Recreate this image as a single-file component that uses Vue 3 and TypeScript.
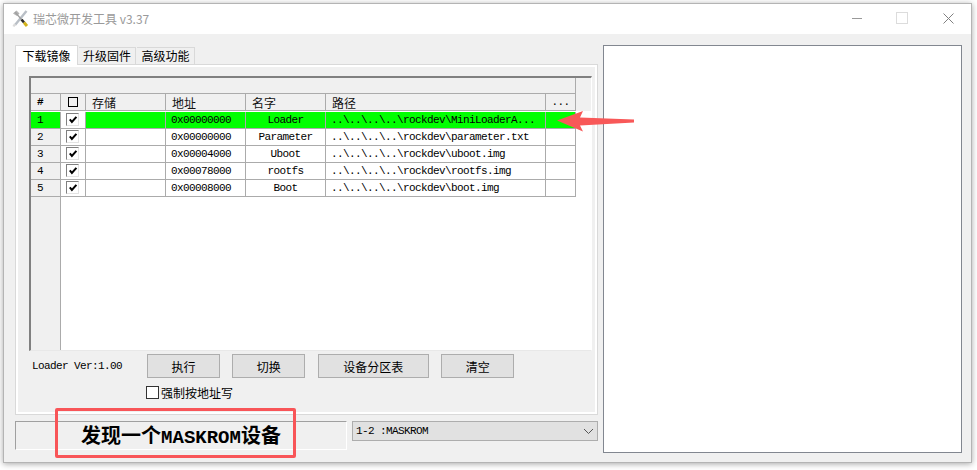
<script setup lang="ts">
interface Row { id: number; addr: string; name: string; path: string }
const rows: Row[] = [
  { id: 1, addr: '0x00000000', name: 'Loader', path: '..\\..\\..\\..\\rockdev\\MiniLoaderA...' },
  { id: 2, addr: '0x00000000', name: 'Parameter', path: '..\\..\\..\\..\\rockdev\\parameter.txt' },
  { id: 3, addr: '0x00004000', name: 'Uboot', path: '..\\..\\..\\..\\rockdev\\uboot.img' },
  { id: 4, addr: '0x00078000', name: 'rootfs', path: '..\\..\\..\\..\\rockdev\\rootfs.img' },
  { id: 5, addr: '0x00008000', name: 'Boot', path: '..\\..\\..\\..\\rockdev\\boot.img' },
]
const buttons = [
  { label: '执行', width: 73 },
  { label: '切换', width: 73 },
  { label: '设备分区表', width: 111 },
  { label: '清空', width: 73 },
]
</script>

<template>
  <div class="page">
    <div class="window">
      <header class="titlebar">
        <svg class="app-icon" width="17" height="18" viewBox="0 0 17 18">
          <path d="M14.5 1 L3 15" stroke="#b9bfc6" stroke-width="2.4" />
          <path d="M3 14 L1.5 16.5" stroke="#dadada" stroke-width="2.4" />
          <path d="M1 3.5 L4.5 0.5 L7.5 3.5 L5 6 Z" fill="#b4b4b4" />
          <path d="M3 2 L9.5 9.5" stroke="#a0a0a0" stroke-width="1.3" />
          <path d="M9.5 9.5 L12 12.5" stroke="#2a2a2a" stroke-width="2.6" />
          <path d="M12 12.5 L15 16" stroke="#d2b21c" stroke-width="3" />
        </svg>
        <span class="title">瑞芯微开发工具 v3.37</span>
        <div class="controls">
          <span class="ctl-min"></span>
          <span class="ctl-max"></span>
          <svg class="ctl-close" width="11" height="11" viewBox="0 0 11 11">
            <path d="M0.5 0.5 L10.5 10.5 M10.5 0.5 L0.5 10.5" stroke="#808080" stroke-width="1" fill="none" />
          </svg>
        </div>
      </header>

      <div class="content">
        <div class="left">
          <nav class="tabs">
            <span class="tab active">下载镜像</span>
            <span class="tab">升级固件</span>
            <span class="tab">高级功能</span>
          </nav>

          <section class="panel">
            <div class="grid-frame">
              <div class="grid-top"></div>
              <div class="grid-row head">
                <span class="cell hash mono">#</span>
                <span class="cell center"><i class="head-box"></i></span>
                <span class="cell cjk">存储</span>
                <span class="cell cjk">地址</span>
                <span class="cell cjk">名字</span>
                <span class="cell cjk">路径</span>
                <span class="cell center mono">...</span>
              </div>
              <div v-for="row in rows" :key="row.id" class="grid-row" :class="{ selected: row.id === 1 }">
                <span class="cell hash index mono">{{ row.id }}</span>
                <span class="cell center check-cell">
                  <i class="check">
                    <svg width="11" height="11" viewBox="0 0 11 11">
                      <path d="M2.8 5.4 L4.9 8 L9.4 2.8" stroke="#000" stroke-width="2" fill="none" />
                    </svg>
                  </i>
                </span>
                <span class="cell"></span>
                <span class="cell mono">{{ row.addr }}</span>
                <span class="cell center mono">{{ row.name }}</span>
                <span class="cell mono">{{ row.path }}</span>
                <span class="cell"></span>
              </div>
              <div class="grid-fill"><span class="fill-index"></span></div>
            </div>

            <div class="actions">
              <span class="loader-ver mono">Loader Ver:1.00</span>
              <button v-for="b in buttons" :key="b.label" class="btn" :style="{ width: b.width + 'px' }">{{ b.label }}</button>
            </div>
            <label class="force">
              <i class="force-box"></i>
              <span>强制按地址写</span>
            </label>
          </section>

          <div class="bottom">
            <div class="status">
              <span class="status-text">发现一个<b>MASKROM</b>设备</span>
              <div class="red-box"></div>
            </div>
            <div class="combo">
              <span class="mono">1-2 :MASKROM</span>
              <svg width="11" height="7" viewBox="0 0 11 7">
                <path d="M1 1 L5.5 5.5 L10 1" stroke="#555" stroke-width="1" fill="none" />
              </svg>
            </div>
          </div>
        </div>
        <aside class="log"></aside>
      </div>

      <svg class="arrow" width="80" height="22" viewBox="0 0 80 22">
        <path d="M0 9.5 L26 0 L23 6.5 L77 8.5 L77 11.5 L23 14.5 L26 20.5 Z" fill="#f85858" />
      </svg>
    </div>
  </div>
</template>

<style>
html, body { margin: 0; background: #fff; }
</style>

<style scoped>
.page {
  width: 977px;
  height: 470px;
  padding: 3px 5px 7px 3px;
  box-sizing: border-box;
  overflow: hidden;
  font-family: "Noto Sans CJK SC", sans-serif;
  font-size: 12px;
  color: #000;
}
.window {
  position: relative;
  height: 100%;
  border: 1px solid #b4b4b4;
  box-sizing: border-box;
  background: #f0f0f0;
  box-shadow: 0 1px 6px rgba(0, 0, 0, 0.35);
}
.titlebar {
  display: flex;
  align-items: center;
  height: 30px;
  box-sizing: border-box;
  padding: 0 0 2px 8px;
  background: #fff;
}
.app-icon { margin-top: 2px; flex: none; }
.title {
  margin-left: 4px;
  color: #9a9a9a;
  font-size: 12px;
  font-family: "Noto Sans CJK SC", "Liberation Sans", sans-serif;
}
.controls {
  margin-left: auto;
  display: flex;
  align-items: center;
  padding-right: 17px;
}
.ctl-min { width: 10px; height: 1px; background: #999; }
.ctl-max {
  width: 10px;
  height: 10px;
  border: 1px solid #dcdcdc;
  box-sizing: content-box;
  margin-left: 34px;
}
.ctl-close { margin-left: 35px; }
.content {
  display: flex;
  gap: 5px;
  padding: 11px 9px 0 11px;
}
.left { width: 583px; flex: none; }
.tabs {
  display: flex;
  height: 19px;
  align-items: flex-end;
}
.tab {
  height: 17px;
  line-height: 16px;
  width: 57px;
  text-align: center;
  box-sizing: border-box;
  background: #f0f0f0;
  border: 1px solid #d9d9d9;
  border-bottom: none;
  border-left: none;
  margin-left: 1px;
}
.tab:last-child { width: 58px; }
.tab.active {
  height: 20px;
  line-height: 19px;
  width: 63px;
  margin-left: 0;
  margin-bottom: -1px;
  background: #fff;
  border-left: 1px solid #d9d9d9;
  position: relative;
  z-index: 1;
}
.panel {
  height: 351px;
  box-sizing: border-box;
  border: 1px solid #d9d9d9;
  box-shadow: inset 0 0 0 2px #fff;
  padding: 11px 5px 0 13px;
}
.grid-frame {
  display: flex;
  flex-direction: column;
  height: 275px;
  box-sizing: border-box;
  border-top: 2px solid #808080;
  border-left: 2px solid #808080;
  border-right: 1px solid #fff;
  border-bottom: 1px solid #e8e8e8;
  background: #fff;
}
.grid-top {
  height: 16px;
  flex: none;
  box-sizing: border-box;
  width: 545px;
  border-bottom: 1px solid #ababab;
  border-right: 1px solid #ababab;
  background: #f0f0f0;
  box-shadow: 15px 0 0 #f0f0f0;
}
.grid-row {
  display: grid;
  grid-template-columns: 30px 25px 80px 80px 80px 220px 30px;
  height: 17px;
  flex: none;
  width: 545px;
}
.grid-row.head {
  background: #f0f0f0;
  box-shadow: 15px 0 0 #f0f0f0;
  margin-bottom: 1px;
}
.cell {
  box-sizing: border-box;
  border-right: 1px solid #ababab;
  border-bottom: 1px solid #ababab;
  padding-left: 5px;
  line-height: 16px;
  white-space: nowrap;
  overflow: hidden;
}
.cjk { font-size: 12px; padding-left: 6px; line-height: 17px; color: #111; }
.center { padding-left: 0; text-align: center; display: flex; align-items: center; justify-content: center; }
.mono {
  font-family: "Liberation Mono", "DejaVu Sans Mono", monospace;
  font-size: 11px;
  letter-spacing: -0.6px;
}
.hash { background: #f0f0f0; }
.selected .cell { background: #00ff00; }
.head .hash { font-weight: 700; padding-left: 6px; }
.index { padding-left: 6px; }
.head-box {
  width: 10px;
  height: 10px;
  border: 1px solid #000;
  box-sizing: border-box;
  display: block;
}
.check-cell,
.selected .check-cell { background: #fff; padding: 0 1px 1px 0; }
.check {
  display: block;
  width: 13px;
  height: 13px;
  box-sizing: border-box;
  border: 1px solid;
  border-color: #808080 #e3e3e3 #e3e3e3 #808080;
  background: #fff;
}
.check svg { display: block; }
.grid-fill { flex: 1; display: flex; }
.fill-index { width: 30px; box-sizing: border-box; background: #f0f0f0; border-right: 1px solid #ababab; }
.actions {
  display: flex;
  align-items: center;
  gap: 12.4px;
  margin-top: 3px;
  height: 24px;
}
.loader-ver { width: 105.6px; padding-left: 3px; box-sizing: border-box; flex: none; }
.btn {
  height: 24px;
  padding: 0;
  box-sizing: border-box;
  background: #e1e1e1;
  border: 1px solid #adadad;
  font: inherit;
  color: #000;
  flex: none;
}
.force {
  display: flex;
  align-items: center;
  gap: 2px;
  margin: 7px 0 0 117px;
  height: 15px;
}
.force-box {
  width: 13px;
  height: 13px;
  border: 1px solid #333;
  background: #fff;
  box-sizing: border-box;
  display: block;
}
.bottom {
  display: flex;
  gap: 5px;
  margin-top: 6px;
  align-items: flex-start;
}
.status {
  position: relative;
  width: 332px;
  height: 29px;
  box-sizing: border-box;
  border: 1px solid;
  border-color: #a0a0a0 #fff #fff #a0a0a0;
  display: flex;
  align-items: center;
  justify-content: center;
}
.status-text {
  font-size: 20px;
  font-weight: 700;
  font-family: "Noto Sans CJK SC", sans-serif;
  line-height: 27px;
  padding-top: 2px;
}
.status-text b {
  font-family: "Liberation Mono", monospace;
  font-size: 19px;
}
.red-box {
  position: absolute;
  left: 39px;
  top: -14px;
  width: 241px;
  height: 50px;
  box-sizing: border-box;
  border: 3px solid #f85558;
  border-radius: 2px;
}
.combo {
  width: 246px;
  height: 20px;
  box-sizing: border-box;
  background: #e1e1e1;
  border: 1px solid #adadad;
  display: flex;
  align-items: center;
  justify-content: space-between;
  padding: 0 3px 0 3px;
}
.log {
  width: 359px;
  height: 408px;
  flex: none;
  box-sizing: border-box;
  background: #fff;
  border: 1px solid #828790;
}
.arrow {
  position: absolute;
  left: 553px;
  top: 107px;
}
</style>
